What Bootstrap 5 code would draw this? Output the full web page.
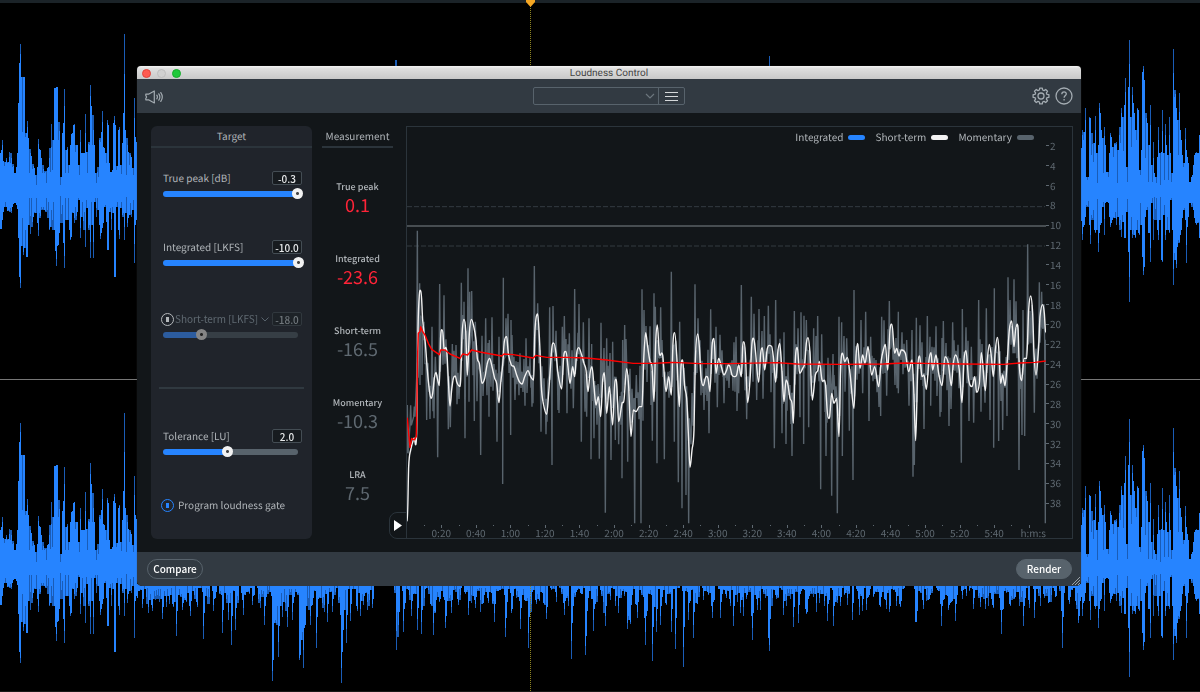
<!DOCTYPE html>
<html lang="en">
<head>
<meta charset="utf-8">
<meta name="viewport" content="width=device-width, initial-scale=1">
<title>Loudness Control</title>
<link href="https://cdn.jsdelivr.net/npm/bootstrap@5.3.0/dist/css/bootstrap.min.css" rel="stylesheet">
<style>
:root{--blue:#2684ff;--text:#b0b5b9;--dim:#5f6971;--line:#2b343b;--bar:#323a42;--ink:#121619}
body{background:#000;color:var(--text);font-family:"Noto Sans CJK SC",sans-serif;font-size:10px;line-height:14px;overflow:hidden;text-rendering:geometricPrecision}
.stage{padding:66px 119px 0 137px}
.plugin{background:var(--ink);border-radius:4px 4px 5px 5px;overflow:hidden;position:relative;box-shadow:0 0 1px #444}
.titlebar{height:13px;background:linear-gradient(#f4f4f4,#dedede 20%,#c9c9c9);color:#444;font:10px/13px Roboto,sans-serif;display:grid;grid-template-columns:1fr auto 1fr;padding:0 5px}
.titlebar>span{line-height:15px}
.dot{width:9px;height:9px;border-radius:50%;border:1px solid #bdbdbd;background:#d0d0d0;padding:0}
.dot.close-dot{background:#ff5a50;border-color:#e2443c}.dot.zoom-dot{background:#1fc83a;border-color:#17ac2c}
.toolbar{height:34px;background:var(--bar);display:grid;grid-template-columns:1fr auto 1fr;align-items:center;padding:0 8px}
.ico{border:0;background:none;padding:0;color:#a3abb1;line-height:0}
.preset{border:1px solid #58636c;border-radius:2px;height:18px}
.preset select{appearance:none;border:0;background:none;width:125px;height:16px}
.preset .ico{width:26px;border-left:1px solid #58636c;color:#d5d8da}
.preset svg.chev{margin-right:3px;margin-left:-14px;pointer-events:none}
.work{padding:13px 8px 13px 14px}
.target{width:161px;background:#20242b;border-radius:6px;padding-bottom:27px}
.head{height:22px;line-height:20px;border-bottom:2px solid var(--line);text-align:center}
.target .head{margin-bottom:23px}
.ctl{padding:0 8px 0 12px}
.ctl+.ctl{margin-top:41px}
.ctl .top-row{height:14px;padding-right:2px;margin-bottom:3px}
.num{width:30px;height:14px;border:1px solid #444d54;border-radius:2px;background:#171b1f;color:#e6e8e9;font-size:10px;font-weight:500;text-align:center;padding:0;line-height:12px}
.slider{display:grid;align-items:center;height:11px}
.slider>*{grid-area:1/1}
.rail{height:6px;margin-right:6px;border-radius:3px;background:linear-gradient(90deg,var(--blue) var(--v),#58636c var(--v))}
.slider input{appearance:none;background:none;width:100%;height:11px;margin:0}
.slider input::-webkit-slider-thumb{appearance:none;width:11px;height:11px;border-radius:50%;background:radial-gradient(circle,#444 0 1px,#f2f2f2 2px)}
.off .rail{background:linear-gradient(90deg,#2c5c9f var(--v),#363e45 var(--v))}
.off .slider input::-webkit-slider-thumb{background:radial-gradient(circle,#222 0 1px,#858585 2px)}
.off .num{color:#70777c;border-color:#31383e;background:#1d2227}
.off select{appearance:none;border:0;background:none;color:var(--dim);padding:0 0 0 1px;width:87px;font:inherit}
.off .power{color:#b4b8bb;margin-left:-2px}
.off{margin-top:44px!important}
.power{appearance:none;width:13px;height:13px;margin:0;border:1px solid currentColor;border-radius:50%;display:grid;place-items:center;flex:none}
.power::before{content:"";width:3px;height:5px;background:currentColor}
.power.lit{color:var(--blue)}
.rule{height:2px;background:#303940;margin:47px 8px 40px}
.gate{margin-top:41px;padding-left:10px;gap:4px}
.measure{width:71px;margin-left:10px;text-align:center}
.measure dl{margin:31px 0 0;display:grid;gap:36px}
.measure dt{font-weight:500;font-size:9px;line-height:16px}
.measure dd{margin:0;font-size:18px;line-height:20px;color:var(--dim)}
.measure dd.hot{color:#ff2438}
.play{width:18px;height:27px;margin:0 -1px 0 -4px;border:1px solid var(--line);border-radius:8px 0 0 8px;background:none;padding:0;line-height:0}
.chart{border:1px solid var(--line);display:grid;grid-template-columns:1fr 26px;grid-template-rows:1fr 14px;position:relative;min-width:0}
.chart>svg{width:100%;height:100%;overflow:hidden;min-height:0}
.legend-row{position:absolute;right:38px;top:3px;gap:10px}
.legend-row i{width:17px;height:5px;border-radius:3px;background:var(--c);margin-left:5px}
.ticks-y,.ticks-x{color:var(--dim);font-size:10px}
.ticks-y{padding:9px 0 11px;display:grid;grid-auto-rows:1fr;min-height:0}
.ticks-y span{display:flex;align-items:center;min-height:0;line-height:10px}
.ticks-y span::before{content:"";width:3px;height:1px;background:currentColor;margin-right:1px}
.ticks-x{padding-left:17px;display:grid;grid-auto-flow:column;grid-auto-columns:1fr;text-align:center;line-height:18px}
.ticks-x span{position:relative;white-space:nowrap}
.ticks-x span::before{content:"";position:absolute;left:50%;top:1px;width:1px;height:3px;background:currentColor}
.ticks-x span::after{content:"";position:absolute;left:0;top:1px;width:1px;height:1px;background:currentColor}
.foot{height:34px;background:var(--bar);padding:0 9px 0 10px}
.pill{height:20px;width:56px;border-radius:10px;border:1px solid #58636c;background:none;color:#fff;font-size:10px;font-weight:500;line-height:16px;padding:0}
.pill.solid{background:#58636c}
.grip{position:absolute;right:1px;bottom:1px}
</style>
</head>
<body>
<svg id="waves" class="position-fixed top-0 start-0 w-100 h-100" viewBox="0 0 1200 692" preserveAspectRatio="none" aria-hidden="true" shape-rendering="crispEdges">
  <path id="wdark" fill="#1a5cb6"/><path id="wlit" fill="#2684ff"/>
  <path d="M0 1H1200" stroke="#1b2328" stroke-width="3"/><path d="M0 691.500H1200" stroke="#181818"/>
  <path d="M0 379.500H1200" stroke="#777"/>
  <path d="M530.500 4V692" stroke="#8e8420" stroke-dasharray="1 1"/>
  <path d="M526 0h9v2l-4.500 5-4.500-5z" fill="#f5a623" shape-rendering="auto"/>
</svg>

<div class="stage position-relative">
<main class="plugin">
  <header class="titlebar">
    <div class="d-flex align-items-center" style="gap:6px">
      <button class="dot close-dot" aria-label="Close"></button><button class="dot" aria-label="Minimize"></button><button class="dot zoom-dot" aria-label="Zoom"></button>
    </div>
    <span>Loudness Control</span>
  </header>

  <div class="toolbar">
    <div><button class="ico" aria-label="Preview"><svg width="19" height="14" viewBox="0 0 19 14" fill="none" stroke="currentColor" stroke-width="1.200" stroke-linejoin="round"><path d="M.8 4.200H3.500L9.300 1V13L3.500 9.800H.8V8.500L1.600 7 .8 5.500z"/><path d="M11.800 5.200q1.200 1.800 0 3.600M13.800 3.800q2.200 3.200 0 6.400M15.800 2.600q3 4.400 0 8.800" stroke-linecap="round"/></svg></button></div>
    <div class="preset d-flex align-items-center">
      <select aria-label="Preset"><option></option></select>
      <svg class="chev" width="10" height="6" viewBox="0 0 10 6" fill="none" stroke="#6b757d" stroke-width="1.200"><path d="M1 1l4 4 4-4"/></svg>
      <button class="ico h-100" aria-label="Menu"><svg width="13" height="11" stroke="currentColor"><path d="M0 1.500H13M0 5.500H13M0 9.500H13"/></svg></button>
    </div>
    <div class="d-flex justify-content-end" style="gap:5px">
      <button class="ico" aria-label="Settings"><svg id="gear" width="18" height="18" viewBox="-9 -9 18 18" fill="none" stroke="currentColor" stroke-width="1.300" stroke-linejoin="round"><path/><circle r="3"/></svg></button>
      <button class="ico" aria-label="Help"><svg width="18" height="18" viewBox="0 0 18 18" fill="none" stroke="currentColor" stroke-width="1.300"><circle cx="9" cy="9" r="8"/><path d="M6.800 7.200C6.800 4 11.500 4.200 11.300 7 11.200 8.500 9.100 8.600 9.100 10.800M9.100 12v1.600"/></svg></button>
    </div>
  </div>

  <div class="work d-flex align-items-stretch">
    <section class="target flex-shrink-0">
      <div class="head">Target</div>
      <div class="ctl">
        <div class="top-row d-flex justify-content-between align-items-center"><label for="tp">True peak [dB]</label><input class="num" id="tp" value="-0.3"></div>
        <div class="slider"><span class="rail" style="--v:99%"></span><input type="range" aria-label="True peak" value="99"></div>
      </div>
      <div class="ctl">
        <div class="top-row d-flex justify-content-between align-items-center"><label for="it">Integrated [LKFS]</label><input class="num" id="it" value="-10.0"></div>
        <div class="slider"><span class="rail" style="--v:100%"></span><input type="range" aria-label="Integrated" value="100"></div>
      </div>
      <div class="ctl off">
        <div class="top-row d-flex align-items-center"><input type="checkbox" class="power" aria-label="Enable short-term">
          <select aria-label="Short-term mode"><option>Short-term [LKFS]</option></select>
          <svg width="8" height="5" viewBox="0 0 8 5" fill="none" stroke="#58636c"><path d="M.5.5 4 4 7.500.5"/></svg>
          <input class="num ms-auto" aria-label="Short-term value" value="-18.0"></div>
        <div class="slider"><span class="rail" style="--v:28%"></span><input type="range" aria-label="Short-term" value="25"></div>
      </div>
      <div class="rule"></div>
      <div class="ctl">
        <div class="top-row d-flex justify-content-between align-items-center"><label for="tl">Tolerance [LU]</label><input class="num" id="tl" value="2.0"></div>
        <div class="slider"><span class="rail" style="--v:47%"></span><input type="range" aria-label="Tolerance" value="45"></div>
      </div>
      <div class="gate d-flex align-items-center">
        <input type="checkbox" class="power lit" id="gate" checked><label for="gate">Program loudness gate</label>
      </div>
    </section>

    <section class="measure flex-shrink-0">
      <div class="head">Measurement</div>
      <dl>
        <div><dt>True peak</dt><dd class="hot">0.1</dd></div>
        <div><dt>Integrated</dt><dd class="hot">-23.6</dd></div>
        <div><dt>Short-term</dt><dd>-16.5</dd></div>
        <div><dt>Momentary</dt><dd>-10.3</dd></div>
        <div><dt>LRA</dt><dd>7.5</dd></div>
      </dl>
    </section>

    <button class="play align-self-end flex-shrink-0" aria-label="Play"><svg width="8" height="11"><path d="M0 0L8 5.500 0 11z" fill="#fff"/></svg></button>

    <section class="chart flex-grow-1">
      <svg viewBox="21 -279 1917 1191" preserveAspectRatio="none" fill="none" role="img" aria-label="Loudness over time">
        <path d="M21 -40H1935M21 78H1935" stroke="#333b41" stroke-dasharray="5 2" vector-effect="non-scaling-stroke"/>
        <path d="M21 18H1938" stroke="#5a6064" stroke-width="1.300" vector-effect="non-scaling-stroke"/>
        <path id="mom" stroke="#58636c" stroke-width="1.400" stroke-linejoin="bevel" vector-effect="non-scaling-stroke"/>
        <path id="sht" stroke="#f2f2f2" stroke-width="1.400" stroke-linejoin="round" vector-effect="non-scaling-stroke"/>
        <path id="int" stroke="#f00" stroke-width="1.400" stroke-linejoin="round" vector-effect="non-scaling-stroke"/>
      </svg>
      <div class="ticks-y" id="ty"></div>
      <div class="ticks-x" id="tx"></div>
      <div class="legend-row d-flex">
        <span class="d-flex align-items-center">Integrated<i style="--c:#2684ff"></i></span>
        <span class="d-flex align-items-center">Short-term<i style="--c:#f2f2f2"></i></span>
        <span class="d-flex align-items-center">Momentary<i style="--c:#58636c"></i></span>
      </div>
    </section>
  </div>

  <footer class="foot d-flex justify-content-between align-items-center">
    <button class="pill">Compare</button><button class="pill solid">Render</button>
  </footer>
  <svg class="grip" width="8" height="8" stroke="#9aa2a8"><path d="M0 8L8 0M3 8L8 3M6 8L8 6"/></svg>
</main>
</div>

<script>
const $ = id => document.getElementById(id);
// "x,y x,y" strings; the second half of each trace starts 990 units further right
const pts = (a, b) => [...a.split(' ').map(p => p.split(',').map(Number)),
                       ...b.split(' ').map(p => p.split(',').map(Number)).map(([x, y]) => [x + 990, y])];
let seed = 11;
const rnd = () => (seed = (seed * 16807) % 2147483647) / 2147483647;
const line = p => 'M' + p.map(q => q.join(' ')).join('L');
// smooth path through the points, flat at every local extreme
const curve = p => 'M' + p[0].join(' ') + p.slice(1).map(([x, y], i) => {
  const slope = k => { const a = p[k - 1], b = p[k], c = p[k + 1];
    return !a || !c || (b[1] - a[1]) * (c[1] - b[1]) <= 0 ? 0 : (c[1] - a[1]) / (c[0] - a[0]); };
  const [x0, y0] = p[i], h = (x - x0) / 3;
  return `C${(x0 + h).toFixed(1)} ${(y0 + h * slope(i)).toFixed(1)} ${(x - h).toFixed(1)} ${(y - h * slope(i + 1)).toFixed(1)} ${x} ${y}`;
}).join('');

const shortTerm = pts(
'22,905 26,740 32,690 42,655 50,640 54,330 58,225 63,213 68,300 76,370 82,450 88,510 93,535 98,520 103,475 108,457 112,475 118,497 122,350 128,333 132,385 140,390 145,480 150,558 155,510 160,475 166,468 170,485 177,497 182,480 186,345 192,298 197,330 202,465 208,340 214,298 221,318 228,360 232,415 238,430 246,490 254,475 262,430 269,415 276,440 284,475 290,490 297,548 302,490 308,435 313,365 320,350 325,400 334,435 342,440 350,465 358,485 366,492 374,470 384,452 392,470 401,480 404,350 408,295 413,282 419,370 424,500 430,550 440,583 446,520 450,460 456,380 462,370 468,400 474,460 485,507 491,410 498,395 504,440 510,490 518,440 524,470 530,400 536,383 545,405 552,430 558,450 564,515 570,460 576,440 582,500 588,555 595,530 602,590 608,480 613,458 620,580 628,500 638,615 645,480 650,490 656,605 666,550 672,540 680,445 686,500 693,650 700,570 708,575 718,560 726,560 731,420 737,338 743,380 750,425 756,440 762,545 767,370 772,315 778,400 788,405 798,515 806,470 814,525 819,370 824,338 831,420 838,560 843,440 848,420 854,500 860,535 865,640 870,742 876,690 882,630 886,420 893,342 898,380 903,470 910,497 918,470 924,475 930,515 936,380 942,355 948,460 956,415 964,440 972,465 980,450 985,435',
'0,440 6,465 14,470 20,465 26,435 34,470 38,380 42,366 46,400 53,548 60,480 66,370 71,355 76,390 86,487 92,400 97,383 104,450 112,385 124,378 130,410 137,487 143,400 149,370 155,440 162,545 168,480 173,490 180,535 186,550 190,610 196,420 202,382 209,460 218,445 224,430 229,370 234,353 240,400 247,540 256,465 264,450 268,424 276,480 286,490 294,592 299,590 305,520 312,550 320,535 327,650 332,440 338,400 344,425 352,412 360,460 372,565 378,410 383,370 390,445 398,405 405,430 414,380 425,465 434,440 446,500 454,420 460,390 466,373 473,450 480,330 486,313 494,400 500,385 507,408 514,390 526,400 536,455 546,420 551,500 557,662 563,450 569,408 576,470 582,465 589,508 597,420 603,398 608,450 618,405 626,460 636,497 645,410 655,430 664,497 670,430 677,405 688,450 696,548 702,420 708,392 716,480 726,500 734,470 740,517 748,490 754,398 766,512 772,420 778,373 784,410 790,470 796,390 802,352 806,380 812,490 818,465 825,497 832,420 838,330 845,303 852,380 858,320 864,325 868,440 875,482 882,415 890,415 896,270 902,228 908,280 912,400 918,465 926,380 930,290 938,254 943,280 947,338');
const integrated = pts(
'22,593 26,640 30,682 35,655 42,660 49,650 53,400 55,340 60,335 62,320 68,335 75,345 85,370 95,388 118,404 122,390 135,390 150,402 180,415 188,402 203,405 215,390 240,396 305,408 312,402 340,404 400,414 408,406 440,412 500,412 560,414 620,420 700,430 760,430 820,427 900,431',
'0,431 140,428 200,432 330,433 460,432 520,429 700,432 820,433 870,429 915,427 947,423');
const peaks = pts(
'22,555 32,556 43,560 52,32 59,190 66,345 96,320 106,410 119,192 132,226 157,372 168,375 184,188 189,285 204,145 209,215 215,213 226,305 257,295 268,360 297,350 310,173 333,300 378,355 403,138 413,250 449,262 459,258 487,320 493,288 508,340 524,207 537,252 550,307 567,295 575,372 603,308 620,355 638,365 668,360 674,315 709,465 726,208 732,270 762,220 766,260 782,262 814,155 839,305 885,193 932,268 948,320',
'18,350 34,195 64,230 87,267 103,288 115,257 137,240 162,337 193,273 213,277 222,287 229,300 251,325 263,288 275,343 309,402 327,290 335,307 350,355 372,210 393,300 407,275 422,350 455,290 478,243 505,275 530,360 559,293 592,288 600,350 640,303 668,307 697,267 724,380 746,240 769,265 793,205 834,172 852,178 879,270 893,73 928,187 935,215');
const dips = pts(
'60,495 66,465 80,600 90,597 102,595 113,712 145,628 151,622 195,655 207,545 223,603 242,705 267,590 291,665 308,792 332,645 375,557 396,560 423,635 438,643 456,735 474,570 501,580 520,565 544,665 560,590 573,718 582,655 598,716 616,878 633,720 646,660 656,673 666,775 683,725 704,910 723,910 757,662 771,730 793,718 823,665 835,787 846,865 858,825 866,910 912,570 927,640 952,562 972,550',
'26,520 50,598 80,540 133,685 156,640 168,672 186,708 210,592 221,672 236,622 272,808 288,708 305,827 322,880 337,708 358,632 369,780 398,520 417,603 452,588 470,527 505,520 549,770 553,735 582,627 602,557 630,590 657,618 694,728 717,603 731,608 753,575 780,600 791,683 806,663 818,630 831,588 867,750 876,645 884,648 913,578 946,910');

// momentary trace: narrow listed extremes over a dense oscillation around the short-term curve
const level = x => { let i = 1; while (i < shortTerm.length - 1 && shortTerm[i][0] < x) i++;
  const [a, b] = [shortTerm[i - 1], shortTerm[i]]; return a[1] + (b[1] - a[1]) * (x - a[0]) / (b[0] - a[0]); };
const centre = x => Math.round(Math.min(700, level(x) * .7 + 133));
const marks = [...peaks, ...dips];
const mom = marks.flatMap(([x, y]) => [[x - 2, centre(x)], [x, y], [x + 2, centre(x)]]);
for (let x = 54, up = 1; x < 1936; x += 3, up = -up)
  if (!marks.some(m => Math.abs(m[0] - x) < 3)) mom.push([x, centre(x) - Math.round(up * (10 + rnd() * rnd() * 150))]);
mom.sort((a, b) => a[0] - b[0]);
$('mom').setAttribute('d', line(mom));
$('sht').setAttribute('d', curve(shortTerm));
$('int').setAttribute('d', line(integrated));

for (let v = 2; v <= 38; v += 2) $('ty').insertAdjacentHTML('beforeend', `<span>${v}</span>`);
for (let s = 20; s <= 340; s += 20) $('tx').insertAdjacentHTML('beforeend', `<span>${Math.floor(s / 60)}:${String(s % 60).padStart(2, '0')}</span>`);
$('tx').insertAdjacentHTML('beforeend', '<span class="text-end">h:m:s</span>');

// gear outline with eight teeth
let g = '';
for (let i = 0; i < 8; i++) for (const [o, r] of [[-15, 6.2], [-9, 8], [9, 8], [15, 6.2]]) {
  const t = (i * 45 + o) * Math.PI / 180; g += (g ? 'L' : 'M') + (r * Math.cos(t)).toFixed(1) + ' ' + (r * Math.sin(t)).toFixed(1); }
document.querySelector('#gear path').setAttribute('d', g + 'z');

// waveform columns, one per unit: top edges and bottom edges
const nums = s => s.split(' ').map(Number);
const leftTop = nums('153 150 140 161 166 162 158 163 162 152 163 153 167 164 173 173 167 153 103 63 44 77 132 77 77 137 133 121 138 173 149 156 169 164 168 175 185 167 139 149 150 158 173 165 173 171 183 168 167 148 172 124 170 140 88 88 87 87 140 122 185 177 133 123 89 173 150 147 173 165 145 134 133 125 124 152 145 145 165 175 130 153 153 153 153 114 152 173 142 145 85 106 145 115 145 173 183 167 177 138 142 132 111 147 148 153 163 120 125 163 172 172 170 123 116 125 170 166 130 127 165 174 143 113 34 130 175 138 152 165 153 157 168 175 98 137 142');
const leftBot = nums('229 229 220 212 207 202 207 211 210 212 208 213 207 204 203 203 205 209 238 277 288 246 218 255 248 230 257 257 225 198 234 198 227 217 212 213 198 223 236 213 218 207 210 207 210 212 198 218 202 230 227 210 230 202 230 251 266 246 245 233 196 223 205 243 268 198 220 220 198 230 240 237 212 213 223 207 220 212 198 200 238 217 202 230 212 247 200 208 230 225 258 202 225 258 202 198 217 198 210 225 239 233 228 223 207 205 222 250 250 212 208 230 207 213 277 277 207 202 230 239 208 202 217 213 240 213 197 227 218 215 203 217 210 200 263 225 220');
const rightTop = nums('148 130 140 132 108 177 180 177 117 118 155 133 162 143 116 153 183 145 103 113 130 138 173 127 145 172 172 177 153 133 137 147 157 143 145 142 183 150 127 143 108 117 151 105 78 167 182 87 40 117 147 87 103 113 130 140 108 110 170 175 150 72 66 80 158 113 123 182 145 105 165 182 142 173 177 183 157 127 153 185 152 110 153 180 124 145 155 180 117 153 182 173 49 97 90 108 120 155 93 130 140 155 167 163 128 150 157 163 182 182 177 175 165 155 153 152 153 153 135');
const rightBot = nums('221 240 227 225 217 205 207 201 225 244 215 220 210 230 233 230 199 252 233 225 223 207 202 235 203 202 202 203 217 227 223 220 217 218 212 225 198 217 230 220 237 215 222 238 238 212 199 252 302 230 217 238 230 235 238 230 220 233 235 203 225 257 275 267 217 210 207 233 233 262 203 198 240 197 220 198 230 240 220 197 260 262 215 205 240 230 217 230 233 200 198 230 285 253 260 268 247 240 243 235 230 218 210 208 220 263 227 217 203 203 207 203 210 218 223 225 223 222 238');
let dark = '', lit = '';
// bright part of a column ends halfway between its own edge and the taller neighbour's, if that is shorter
const lean = (a, i, far, near) => near(a[i], (a[i] + far(a[i - 1] ?? a[i], a[i + 1] ?? a[i])) / 2);
const bar = (x, a, b) => `M${x} ${Math.round(a)}V${Math.round(b)}H${x + 1}V${Math.round(a)}z`;
function band(x0, top, bot, map) {
  top.forEach((t, i) => {
    const l = top[i - 1] ?? t, r = top[i + 1] ?? t, lb = bot[i - 1] ?? bot[i], rb = bot[i + 1] ?? bot[i];
    dark += bar(x0 + i, map(Math.min(t, Math.max(l, r))), map(Math.max(bot[i], Math.min(lb, rb))));
    lit += bar(x0 + i, map(lean(top, i, Math.min, Math.max)), map(lean(bot, i, Math.max, Math.min)));
  });
}
for (const map of [y => y, y => 379.7 + .984 * y]) { band(0, leftTop, leftBot, map); band(1081, rightTop, rightBot, map); }

// stretch visible below the window
const low = Array.from({length: 944}, () => rnd() < .2 ? 586 : 588 + Math.round(rnd() * rnd() * 30));
const spikes = nums('142 608 148 613 152 611 162 619 169 604 176 636 182 610 190 616 203 639 213 611 222 633 228 620 231 645 235 630 252 605 264 625 272 681 273 660 275 620 276 625 278 657 279 626 282 617 287 627 292 620 299 660 300 655 301 640 302 632 303 668 304 628 305 625 310 625 316 648 322 608 327 622 332 612 341 683 342 652 343 630 346 643 350 621 360 616 363 605 372 608 396 650 397 612 398 637 403 632 411 616 417 630 421 634 433 635 435 613 445 628 446 616 451 613 468 615 475 608 494 622 505 637 506 618 520 629 528 648 546 619 564 615 571 659 585 655 586 636 593 631 605 626 615 606 627 629 628 616 629 620 630 624 637 618 645 645 644 618 652 661 653 627 656 632 660 625 671 632 675 649 683 667 688 620 693 638 712 618 720 618 733 626 740 613 752 640 751 616 757 610 769 651 768 638 783 615 793 627 798 623 807 612 827 621 833 626 852 620 862 611 866 610 880 607 896 606 915 622 916 622 941 626 955 621 973 609 985 609 1001 634 1000 610 1010 606 1023 626 1034 618 1048 603 1062 648 1061 611 1068 600 1078 623 1079 616');
for (let x = 374; x < 394; x++) low[x - 137] = 586;
for (let x = 905; x < 914; x++) low[x - 137] = 586;
for (let i = 0; i < spikes.length; i += 2) {
  const k = spikes[i] - 137; low[k] = spikes[i + 1];
  low[k + 1] = Math.max(low[k + 1], Math.round(586 + (spikes[i + 1] - 586) * .5));
}
band(137, low.map(() => 584), low, y => y);
dark += bar(395, 60, 66) + bar(396, 60, 66) + bar(769, 56, 66);
$('wdark').setAttribute('d', dark);
$('wlit').setAttribute('d', lit);
</script>
<script src="https://cdn.jsdelivr.net/npm/bootstrap@5.3.0/dist/js/bootstrap.bundle.min.js"></script>
</body>
</html>
